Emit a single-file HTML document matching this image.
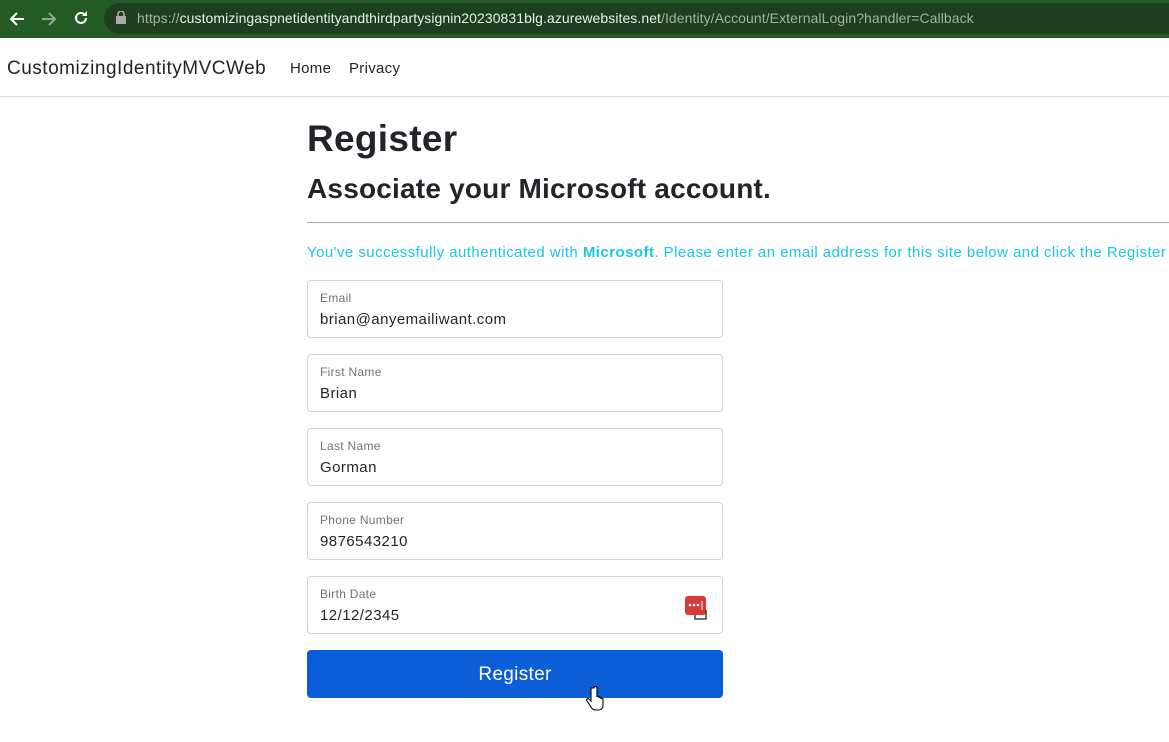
<!DOCTYPE html>
<html><head><meta charset="utf-8"><style>
*{box-sizing:border-box}
body{margin:0;width:1169px;height:742px;overflow:hidden;background:#fff;font-family:"Liberation Sans",sans-serif;color:#212529}
.bar{position:absolute;left:0;top:0;width:1169px;height:38px;background:#245a24}
.url{position:absolute;left:104px;top:3px;width:1100px;height:31px;border-radius:16px;background:#1d3f1f}
.urltext{position:absolute;left:137px;top:10px;font-size:14px;color:#e8f0e8;white-space:nowrap;letter-spacing:0.07px}
.urltext span{color:#9fb39f}
.nav{position:absolute;top:38px;left:0;width:1169px;height:59px;border-bottom:1px solid #dee2e6;box-shadow:0 1px 3px rgba(0,0,0,.06)}
.brand{position:absolute;left:7px;top:20px;font-size:19px;letter-spacing:0.5px}
.nl{position:absolute;top:22px;font-size:15px;letter-spacing:0.3px}
h1{position:absolute;left:307px;top:118px;margin:0;font-size:37px;font-weight:bold;letter-spacing:0.3px}
h2{position:absolute;left:307px;top:173px;margin:0;font-size:28px;font-weight:bold;letter-spacing:0.2px}
hr{position:absolute;left:307px;top:222px;width:870px;margin:0;border:0;border-top:1px solid #aaa}
.info{position:absolute;left:307px;top:244px;font-size:15px;color:#1ac6e8;white-space:nowrap;letter-spacing:0.45px}
.f{position:absolute;left:307px;width:416px;height:58px;border:1px solid #ced4da;border-radius:4px}
.f .l{position:absolute;left:12px;top:10px;font-size:12px;color:#6c757d;letter-spacing:0.3px}
.f .v{position:absolute;left:12px;top:30px;font-size:15px;letter-spacing:0.45px}
.btn{position:absolute;left:307px;top:650px;width:416px;height:48px;background:#0b5ed7;border-radius:4px;color:#fff;font-size:19px;text-align:center;line-height:50px;letter-spacing:0.3px}
</style></head><body>
<div class="bar">
<svg style="position:absolute;left:8px;top:10px" width="18" height="18" viewBox="0 0 18 18"><path d="M16 9H3M9 3L3 9l6 6" stroke="#fff" stroke-width="2" fill="none"/></svg>
<svg style="position:absolute;left:40px;top:10px" width="18" height="18" viewBox="0 0 18 18"><path d="M2 9h13M9 3l6 6-6 6" stroke="#8fa88f" stroke-width="2" fill="none"/></svg>
<svg style="position:absolute;left:72px;top:9px" width="18" height="18" viewBox="0 0 18 18"><path d="M14 9a5 5 0 1 1-1.5-3.6" stroke="#fff" stroke-width="2" fill="none"/><path d="M15 2v5h-5z" fill="#fff"/></svg>
<div class="url"></div>
<svg style="position:absolute;left:116px;top:11px" width="10" height="13" viewBox="0 0 10 13"><rect x="0" y="5" width="10" height="8" fill="#aaa"/><path d="M2 5V3a3 3 0 0 1 6 0v2" stroke="#aaa" stroke-width="1.6" fill="none"/></svg>
<div class="urltext"><span>https://</span>customizingaspnetidentityandthirdpartysignin20230831blg.azurewebsites.net<span>/Identity/Account/ExternalLogin?handler=Callback</span></div>
</div>
<div class="nav"><div class="brand">CustomizingIdentityMVCWeb</div><div class="nl" style="left:290px">Home</div><div class="nl" style="left:349px">Privacy</div></div>
<h1>Register</h1>
<h2>Associate your Microsoft account.</h2>
<hr>
<div class="info">You've successfully authenticated with <b>Microsoft</b>. Please enter an email address for this site below and click the Register button</div>
<div class="f" style="top:280px"><div class="l">Email</div><div class="v">brian@anyemailiwant.com</div></div>
<div class="f" style="top:354px"><div class="l">First Name</div><div class="v">Brian</div></div>
<div class="f" style="top:428px"><div class="l">Last Name</div><div class="v">Gorman</div></div>
<div class="f" style="top:502px"><div class="l">Phone Number</div><div class="v">9876543210</div></div>
<div class="f" style="top:576px"><div class="l">Birth Date</div><div class="v">12/12/2345</div>
<svg style="position:absolute;left:376px;top:18px" width="24" height="26" viewBox="0 0 24 26"><rect x="1" y="1" width="21" height="19" rx="3" fill="#d93b3b"/><circle cx="6" cy="10" r="1.3" fill="#fff"/><circle cx="10" cy="10" r="1.3" fill="#fff"/><circle cx="14" cy="10" r="1.3" fill="#fff"/><path d="M18 6v9" stroke="#fff"/><path d="M11 20v4h11v-9" stroke="#222" stroke-width="1.3" fill="none"/></svg></div>
<div class="btn">Register</div>
<svg style="position:absolute;left:586px;top:686px" width="18" height="26" viewBox="0 0 18 26"><path d="M5 2v13l-2-2c-1-1-3 0-2 2l4 6c1 2 3 3 5 3h3c2 0 4-2 4-4v-7c0-1-2-1-2 0v-1c0-1-2-1-2 0v-1c0-1-2-1-2 0V2c0-2-3-2-3 0z" fill="#fff" stroke="#000" stroke-width="1.1"/></svg>
</body></html>
